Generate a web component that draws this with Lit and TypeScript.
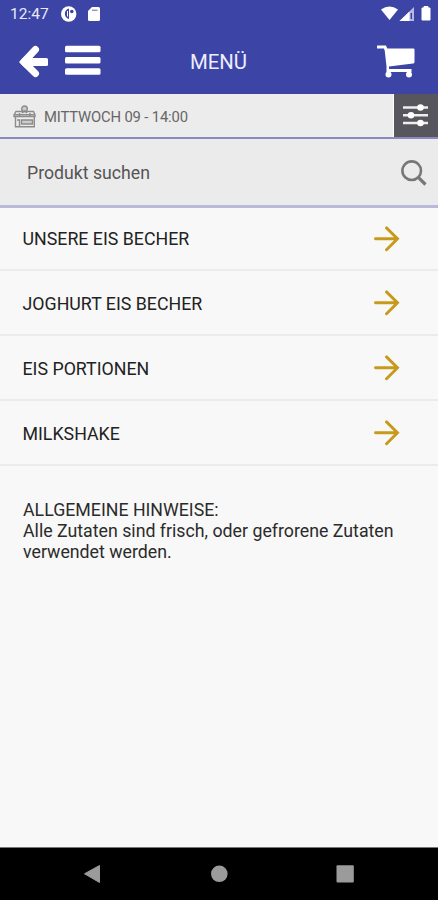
import { LitElement, html, css } from "lit";
import { customElement } from "lit/decorators.js";

const categories = ["UNSERE EIS BECHER", "JOGHURT EIS BECHER", "EIS PORTIONEN", "MILKSHAKE"];

@customElement("app-root")
class AppRoot extends LitElement {
  static styles = css`
    :host { display: flex; flex-direction: column; height: 900px; background: #f8f8f8; color: #222; font-family: Roboto, sans-serif; overflow: hidden; }
    * { box-sizing: border-box; }
    svg { display: block; flex: none; }
    .status { height: 28px; background: #3c45a5; color: #e8eaf8; display: flex; align-items: center; padding: 0 7px 0 10px; font-size: 15.5px; }
    .time { width: 51px; }
    .spacer { flex: 1; }
    .bar { height: 66px; background: #3c45a5; color: #fff; display: grid; grid-template-columns: 1fr auto 1fr; align-items: center; padding: 0 22px 0 18px; }
    .left { display: flex; gap: 16px; align-items: center; }
    .title { font-size: 20.4px; color: #eef; padding: 2px 0 0 3px; }
    .right { justify-self: end; }
    .slot { height: 45px; display: flex; border-bottom: 2px solid #8c89c0; background: #ececec; }
    .when { flex: 1; display: flex; align-items: center; gap: 7px; padding: 3px 0 0 13px; font-size: 14.8px; letter-spacing: -0.15px; color: #666; border-right: 1px solid #fff; }
    .filter { width: 44px; background: #56565c; display: grid; place-items: center; padding-bottom: 1px; }
    .search { height: 69px; background: #ebebeb; border-bottom: 3px solid #bab9d9; display: flex; align-items: center; justify-content: space-between; padding: 1px 11px 0 27px; font-size: 17.7px; color: #555; }
    .item { height: 65px; border-bottom: 2px solid #ebebeb; display: flex; align-items: center; justify-content: space-between; padding: 0 38px 0 22.5px; font-size: 17.8px; }
    .item:first-child { height: 63px; }
    .label { padding-top: 2px; }
    .item:first-child .label { padding-top: 0; }
    .notes { flex: 1; padding: 34px 22px 0 23px; font-size: 17.75px; line-height: 21.2px; color: #2b2b2b; }
    .line { white-space: nowrap; }
    .nav { height: 53px; background: #000; border-top: 1px solid #777; }
  `;

  render() {
    return html`
      <div class="status">
        <span class="time">12:47</span>
        <svg width="44" height="18" viewBox="0 0 44 18"><circle cx="7.700" cy="9" r="7.700" fill="#fff"/><path d="M8 3.500v10.500C2.500 13 2.500 4.500 8 3.500z" fill="#3c45a5"/><path d="M6.500 6v5.500" stroke="#fff" stroke-width="1"/><circle cx="10.800" cy="6.500" r="1.800" fill="#3c45a5"/><path d="M31 2h6.500A1.500 1.500 0 0 1 39 3.500v11a1.500 1.500 0 0 1-1.500 1.500h-9a1.500 1.500 0 0 1-1.500-1.500V6z" fill="#fff"/><path d="M31 5.300h5.500" stroke="#8f96d0" stroke-width="1.500"/></svg>
        <span class="spacer"></span>
        <svg width="50" height="18" viewBox="0 0 50 18"><path d="M0 4.500Q8.500-1.500 17 4.500L8.500 15z" fill="#fff"/><path d="M33 2v14H18.500z" fill="#b5b9e2"/><path d="M28.500 6.500V16h-10z" fill="#fff"/><path d="M30.300 8v6" stroke="#3c45a5" stroke-width="1.500"/><path d="M41 3h2V1.500h4V3h2v12h-8z" fill="#fff" stroke="#fff" stroke-linejoin="round"/></svg>
      </div>
      <div class="bar">
        <div class="left">
          <svg width="31" height="34" viewBox="0 0 31 34"><path d="M17.500 5.500L5.800 18l11.700 11.500" fill="none" stroke="#fff" stroke-width="7" stroke-linecap="round" stroke-linejoin="round"/><path d="M7 14h21.500a1.500 1.500 0 0 1 1.500 1.500v5a1.500 1.500 0 0 1-1.500 1.500H7z" fill="#fff"/><path d="M1 18l6-6v12z" fill="#fff"/></svg>
          <svg width="36" height="32" viewBox="0 0 36 32" fill="#fff"><rect y="0.800" width="35.500" height="6.500" rx="1.500"/><rect y="12" width="35.500" height="6.500" rx="1.500"/><rect y="23.300" width="35.500" height="6.500" rx="1.500"/></svg>
        </div>
        <div class="title">MENÜ</div>
        <svg class="right" width="39" height="34" viewBox="0 0 39 34"><path d="M1 3h7l1 2.500" fill="none" stroke="#fff" stroke-width="3" stroke-linecap="round"/><path d="M7.500 4.500H36.500a1 1 0 0 1 1 1V18a1.500 1.500 0 0 1-1.500 1.500L12 22.500v2.500h22.500v3H9.500V22.500z" fill="#fff"/><circle cx="11.500" cy="30.500" r="3" fill="#fff"/><circle cx="32" cy="30.500" r="3" fill="#fff"/></svg>
      </div>
      <div class="slot">
        <div class="when">
          <svg width="24" height="24" viewBox="0 0 24 24" fill="none" stroke="#8b8b8b" stroke-width="1.400"><path d="M2.500 11.500v10.300h18.800V11.500M1 10L3 6.500h17.500L22 10v1.500H1zM6.500 8v3.500M17 8v3.500M6.500 21.500v-6.500H4"/><path d="M8.500 15h11v4h-11z" fill="#ccc"/><circle cx="11.500" cy="3.800" r="2.800" fill="#ccc"/><path d="M1 9.800h21M9 8l2.500-2L14 8"/></svg>
          <span class="when-text">MITTWOCH 09 - 14:00</span>
        </div>
        <div class="filter"><svg width="26" height="24" viewBox="0 0 26 24"><path d="M0 4.500h25M0 12.200h25M0 20h25" stroke="#eee" stroke-width="2.500"/><g fill="#fff"><circle cx="17.500" cy="4.500" r="3.300"/><circle cx="8" cy="12.200" r="3.300"/><circle cx="17.500" cy="20" r="3.300"/></g></svg></div>
      </div>
      <div class="search"><span>Produkt suchen</span><svg width="26" height="26" viewBox="0 0 26 26" fill="none" stroke="#777" stroke-width="2.600"><circle cx="10.700" cy="10.700" r="9.300"/><path d="M17.300 17.300l7.200 7.200" stroke-width="3.200"/></svg></div>
      <div class="list">
        ${categories.map((c) => html`<div class="item"><span class="label">${c}</span><svg width="26" height="26" viewBox="0 0 26 26" fill="none" stroke="#c79a1b" stroke-width="2.900" stroke-linecap="round"><path d="M1.500 12.700H23.500M12.500 1.900L23.500 12.700 12.500 23.700"/></svg></div>`)}
      </div>
      <div class="notes">
        <div class="line">ALLGEMEINE HINWEISE:</div>
        <div class="line">Alle Zutaten sind frisch, oder gefrorene Zutaten</div>
        <div class="line">verwendet werden.</div>
      </div>
      <div class="nav"><svg width="438" height="52" viewBox="0 0 438 52" fill="#9b9b9b"><path d="M84.500 25.800L99.500 17.500v17z" stroke="#9b9b9b" stroke-linejoin="round"/><circle cx="219.300" cy="25.800" r="8.300"/><rect x="336.500" y="17.300" width="17.300" height="17.300" rx="1"/></svg></div>
    `;
  }
}
